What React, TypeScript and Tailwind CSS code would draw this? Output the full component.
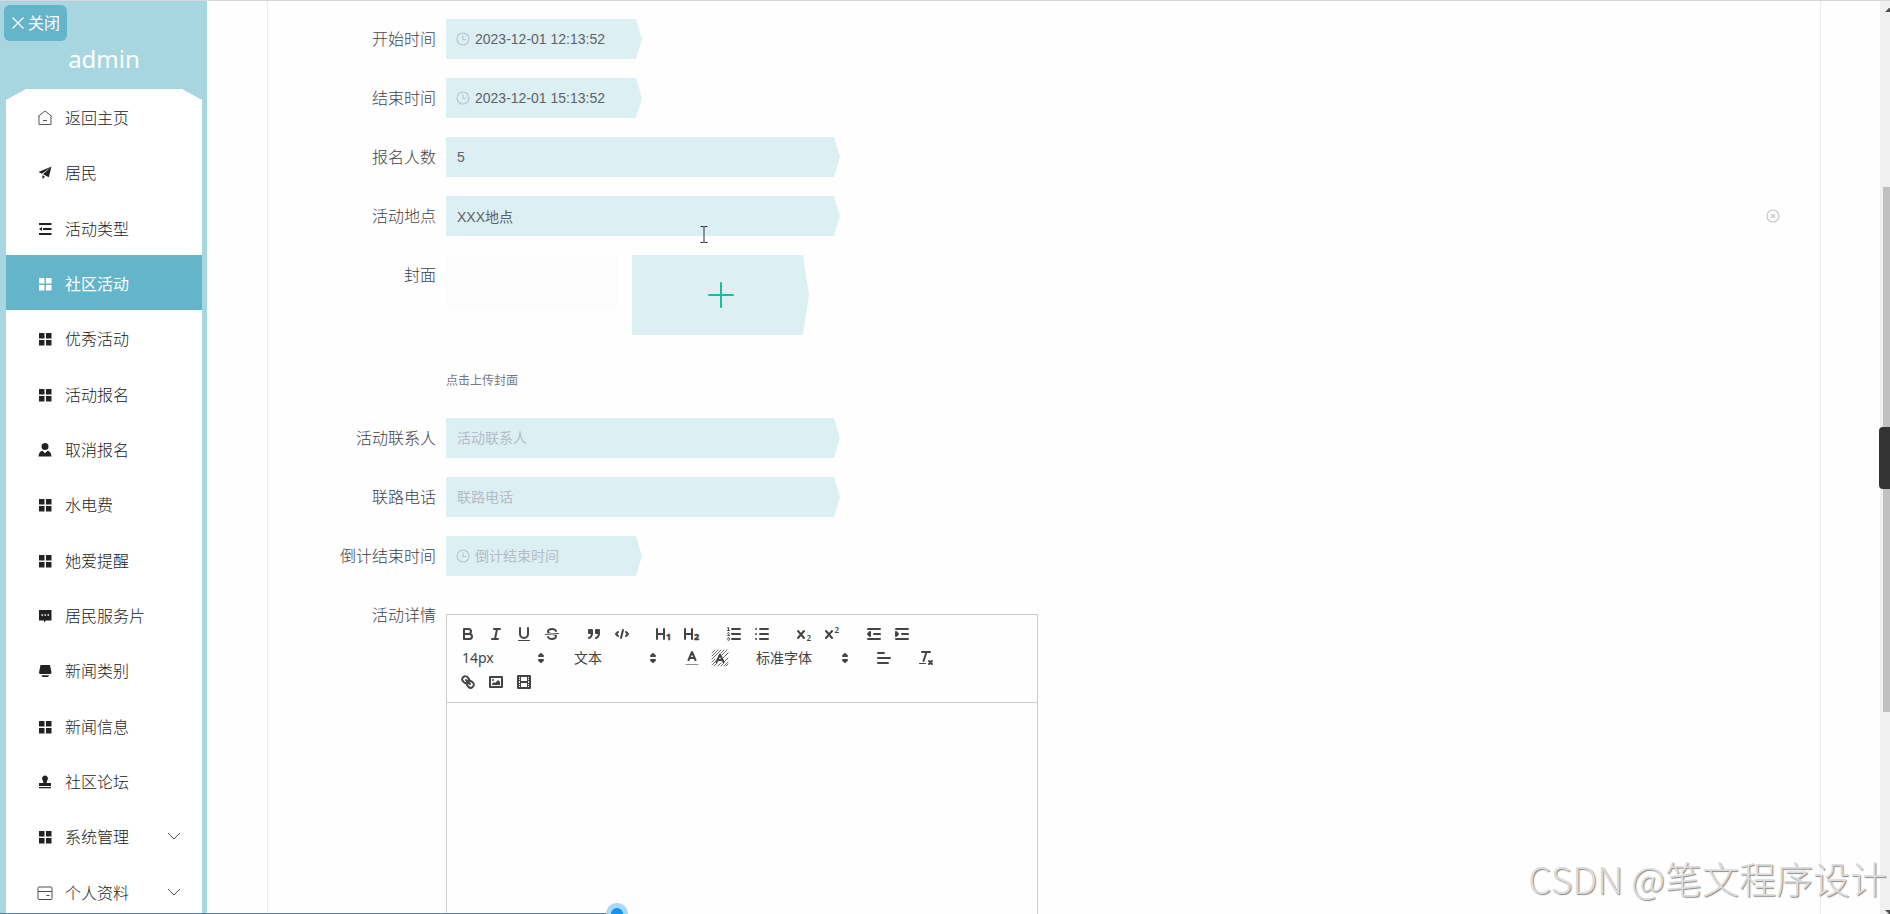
import type { ReactNode } from "react";

type NavIcon = "home" | "plane" | "fold" | "grid" | "user" | "comment" | "shop" | "stamp" | "card";

const squares = <path d="M3 3h5.500v5.500H3zM10 3h5.500v5.500H10zM3 10h5.500v5.500H3zM10 10h5.500v5.500H10z" fill="currentColor" />;

const navIcons: Record<NavIcon, ReactNode> = {
  home: (
    <g fill="none" stroke="currentColor" strokeWidth="1" opacity="0.75">
      <path d="M2 7.500 9 2l7 5.500M3 7v8.500h12V7" />
      <path d="M7 11.500h4" />
    </g>
  ),
  plane: <path d="M15.500 2.500 2.500 8l3.500 1.800zM15.500 2.500 7 10.300l5.800 3zM6.300 11.200l2.600 1.300-2.300 2.800z" fill="currentColor" />,
  fold: (
    <path d="M3 3h12.500v2H3zM7 8h8.500v2H7zM3 13h12.500v2H3zM3 9l3-2v4z" fill="currentColor" />
  ),
  grid: squares,
  user: (
    <g fill="currentColor">
      <circle cx="9" cy="5.500" r="3.500" />
      <path d="M2.500 15.500c.3-3.800 1.700-5.300 4-5.800L9 12.200l2.500-2.500c2.300.5 3.700 2 4 5.800z" />
    </g>
  ),
  comment: (
    <g>
      <path d="M3 3h12.500v10.500H10L8 15.500v-2H3z" fill="currentColor" />
      <path d="M5.500 8h1.500M8.500 8h1.500M11.500 8h1.500" stroke="white" strokeWidth="1.300" />
    </g>
  ),
  shop: (
    <path d="M4.500 3h9.500L15.500 10.500q-.2 1.500-1.500 1.500H4.500Q3.200 12 3 10.500zM5.500 13.200h7.500q-.2 1.800-1.500 1.800h-4.500q-1.300 0-1.500-1.800z" fill="currentColor" />
  ),
  stamp: (
    <path d="M9 2.500a3 3 0 0 1 2 5.200L10.500 10H15v3H3v-3h4.500L7 7.700a3 3 0 0 1 2-5.200zM3 14h12v1.300H3z" fill="currentColor" />
  ),
  card: (
    <g fill="none" stroke="currentColor" strokeWidth="1" opacity="0.8">
      <rect x="2" y="3" width="14" height="12.500" rx="1" />
      <path d="M2 7.500h14M10.500 11.500h3" />
    </g>
  ),
};

const navItems: { label: string; icon: NavIcon; active?: boolean; sub?: boolean }[] = [
  { label: "返回主页", icon: "home" },
  { label: "居民", icon: "plane" },
  { label: "活动类型", icon: "fold" },
  { label: "社区活动", icon: "grid", active: true },
  { label: "优秀活动", icon: "grid" },
  { label: "活动报名", icon: "grid" },
  { label: "取消报名", icon: "user" },
  { label: "水电费", icon: "grid" },
  { label: "她爱提醒", icon: "grid" },
  { label: "居民服务片", icon: "comment" },
  { label: "新闻类别", icon: "shop" },
  { label: "新闻信息", icon: "grid" },
  { label: "社区论坛", icon: "stamp" },
  { label: "系统管理", icon: "grid", sub: true },
  { label: "个人资料", icon: "card", sub: true },
];

function Sidebar() {
  return (
    <aside className="flex w-[207px] shrink-0 flex-col bg-[#a7d6e0] px-[5px] pl-[6px]">
      <div className="relative flex h-[89px] shrink-0 items-end justify-center pb-[14px]">
        <button className="absolute top-[5px] -left-[2px] flex h-9 w-[63px] items-center justify-center gap-[3px] rounded-md bg-[#64b4ca] text-base text-white">
          <svg viewBox="0 0 14 14" className="size-[14px]" fill="none" stroke="currentColor" strokeWidth="1.200">
            <path d="M1.500 1.500l11 11M12.500 1.500l-11 11" />
          </svg>
          关闭
        </button>
        <span className="text-2xl leading-8 text-white">admin</span>
      </div>
      <nav className="-mb-[5px] flex min-h-0 flex-1 flex-col bg-white [clip-path:polygon(0_11px,20px_0,calc(100%_-_20px)_0,100%_11px,100%_100%,0_100%)]">
        <ul className="flex flex-1 flex-col">
          {navItems.map((item) => (
            <li key={item.label} className="flex flex-1">
              <a
                href="#"
                className={
                  item.active
                    ? "flex flex-1 items-center gap-[11px] bg-[#64b4ca] pt-[3px] pr-[21px] pl-[30px] text-base leading-6 text-white"
                    : "flex flex-1 items-center gap-[11px] pt-[3px] pr-[21px] pl-[30px] text-base leading-6 font-light text-[#222]"
                }
              >
                <svg viewBox="0 0 18 18" className="size-[18px] shrink-0">
                  {navIcons[item.icon]}
                </svg>
                <span className="flex-1">{item.label}</span>
                {item.sub && (
                  <svg viewBox="0 0 14 14" className="size-[14px]" fill="none" stroke="#555" strokeWidth="1">
                    <path d="M1 3l6 6 6-6" />
                  </svg>
                )}
              </a>
            </li>
          ))}
        </ul>
      </nav>
    </aside>
  );
}

function Row({ id, label, children }: { id: string; label: string; children: ReactNode }) {
  return (
    <div className="mb-[19px] flex">
      <label
        htmlFor={id}
        className="h-10 w-[178px] shrink-0 pr-[10px] text-right text-base leading-[42px] font-light text-[#404246]"
      >
        {label}
      </label>
      {children}
    </div>
  );
}

const fieldClip = "[clip-path:polygon(0_0,calc(100%_-_6px)_0,100%_50%,calc(100%_-_6px)_100%,0_100%)]";

function TextField({ id, label, value, clearable }: { id: string; label: string; value?: string; clearable?: boolean }) {
  return (
    <Row id={id} label={label}>
      <div className="flex flex-1 items-center justify-between pr-[40px]">
        <input
          id={id}
          defaultValue={value}
          placeholder={label}
          className={`h-10 w-[394px] bg-[#dceff3] px-[11px] text-sm text-[#606266] outline-none placeholder:text-[#b4bcc6] ${fieldClip}`}
        />
        {clearable && (
          <button type="button" aria-label="清除">
            <svg viewBox="0 0 14 14" className="size-[14px]" fill="none" stroke="#c6c8cc" strokeWidth="1.200">
              <circle cx="7" cy="7" r="6" />
              <path d="M5 5l4 4M9 5l-4 4" />
            </svg>
          </button>
        )}
      </div>
    </Row>
  );
}

function DateField({ id, label, value }: { id: string; label: string; value?: string }) {
  return (
    <Row id={id} label={label}>
      <div className={`flex h-10 w-[196px] items-center gap-[5px] bg-[#dceff3] pl-[10px] ${fieldClip}`}>
        <svg viewBox="0 0 14 14" className="size-[14px] shrink-0" fill="none" stroke="#b9c5cb" strokeWidth="1.100">
          <circle cx="7" cy="7" r="6" />
          <path d="M7 3.500V7.500h3" />
        </svg>
        <input
          id={id}
          defaultValue={value}
          placeholder={label}
          className="h-10 min-w-0 flex-1 bg-transparent text-sm text-[#606266] outline-none placeholder:text-[#b4bcc6]"
        />
      </div>
    </Row>
  );
}

function Tool({ name, children }: { name: string; children: ReactNode }) {
  return (
    <button type="button" aria-label={name} className="flex h-6 w-7 items-center justify-center">
      <svg
        viewBox="0 0 18 18"
        className="size-[18px]"
        fill="none"
        stroke="#444"
        strokeWidth="2"
        strokeLinecap="round"
        strokeLinejoin="round"
      >
        {children}
      </svg>
    </button>
  );
}

function Picker({ label, wide, value }: { label: string; wide?: boolean; value: string }) {
  return (
    <span className={wide ? "relative flex h-6 w-[108px]" : "relative flex h-6 w-[98px]"}>
      <select aria-label={label} className="h-6 w-full appearance-none bg-transparent px-2 text-sm leading-6 text-[#444] outline-none">
        <option>{value}</option>
      </select>
      <svg
        viewBox="0 0 18 18"
        className="pointer-events-none absolute top-[3px] right-[2px] size-[18px]"
        fill="#444"
        stroke="#444"
        strokeWidth="2"
        strokeLinejoin="round"
      >
        <path d="M7 11l2 2 2-2zM7 7l2-2 2 2z" />
      </svg>
    </span>
  );
}

const digit = "font-['Noto_Sans'] text-[9px] font-bold";
const script = "font-['Noto_Sans'] text-[8px] font-semibold";

function Editor() {
  return (
    <div className="mt-[19px] w-[592px] border border-[#ccc] font-['Noto_Sans','Noto_Sans_CJK_SC',sans-serif]">
      <div className="border-b border-[#ccc] px-[7px] pt-[7px] pb-2">
        <div className="flex gap-[14px]">
          <div className="flex">
            <Tool name="加粗">
              <path d="M5 4h4.500a2.500 2.500 0 0 1 0 5H5zM5 9h5.500a2.500 2.500 0 0 1 0 5H5z" />
            </Tool>
            <Tool name="斜体">
              <path d="M7 4h6M5 14h6M8 14l2-10" />
            </Tool>
            <Tool name="下划线">
              <path d="M5 3v6a4 4 0 0 0 8 0V3" />
              <path d="M3.500 15.500h11" strokeWidth="1" />
            </Tool>
            <Tool name="删除线">
              <path d="M15.500 8.500l-13 1" strokeWidth="1" />
              <g fill="#444" stroke="none">
                <path d="M9.007,8C6.542,7.791,6,7.519,6,6.500,6,5.792,7.283,5,9,5c1.571,0,2.765.679,2.969,1.309a1,1,0,0,0,1.900-.617C13.356,4.106,11.354,3,9,3,6.200,3,4,4.538,4,6.500a3.200,3.200,0,0,0,.5,1.843Z" />
                <path d="M8.984,10C11.457,10.208,12,10.479,12,11.500c0,0.708-1.283,1.500-3,1.500-1.571,0-2.765-.679-2.969-1.309a1,1,0,1,0-1.900.617C4.644,13.894,6.646,15,9,15c2.800,0,5-1.538,5-3.500a3.200,3.200,0,0,0-.5-1.843Z" />
              </g>
            </Tool>
          </div>
          <div className="flex">
            <Tool name="引用">
              <path d="M4 5h3v3H4zM11 5h3v3h-3z" fill="#444" />
              <path d="M7 8c0 4-3 5-3 5M14 8c0 4-3 5-3 5" />
            </Tool>
            <Tool name="代码">
              <path d="M5 7L3 9l2 2M13 7l2 2-2 2M10 5L8 13" />
            </Tool>
          </div>
          <div className="flex">
            <Tool name="标题一">
              <path d="M2 4v10M9 4v10M2 9h7" />
              <text x="11" y="15" className={digit} fill="#444" stroke="#444" strokeWidth="0.500">
                1
              </text>
            </Tool>
            <Tool name="标题二">
              <path d="M2 4v10M9 4v10M2 9h7" />
              <text x="11" y="15" className={digit} fill="#444" stroke="#444" strokeWidth="0.500">
                2
              </text>
            </Tool>
          </div>
          <div className="flex">
            <Tool name="有序列表">
              <path d="M7 4h8M7 9h8M7 14h8" />
              <path
                d="M2.500 3l1-.5V5.500M2.500 5.500h2M4.500 10.500h-2c0-.2 1.850-1 1.850-2.200a1 1 0 0 0-1.850-.1M2.500 14.800a1 1 0 0 0 1.850-.1.700.700 0 0 0-.6-.7.700.700 0 0 0 .6-.7 1 1 0 0 0-1.850-.1"
                strokeWidth="1"
              />
            </Tool>
            <Tool name="无序列表">
              <path d="M7 4h8M7 9h8M7 14h8M3 4h.01M3 9h.01M3 14h.01" />
            </Tool>
          </div>
          <div className="flex">
            <Tool name="下标">
              <path d="M3 6l6 7M9 6l-6 7" />
              <text x="11.500" y="16" className={script} fill="#444" stroke="none">
                2
              </text>
            </Tool>
            <Tool name="上标">
              <path d="M3 6l6 7M9 6l-6 7" />
              <text x="11.500" y="8" className={script} fill="#444" stroke="none">
                2
              </text>
            </Tool>
          </div>
          <div className="flex">
            <Tool name="减少缩进">
              <path d="M3 14h12M3 4h12M9 9h6M5 7v4L3 9z" />
            </Tool>
            <Tool name="增加缩进">
              <path d="M3 14h12M3 4h12M9 9h6" />
              <path d="M3 7v4l2-2z" fill="#444" />
            </Tool>
          </div>
        </div>
        <div className="flex gap-[14px]">
          <Picker label="字号" value="14px" />
          <Picker label="标题" value="文本" />
          <div className="flex">
            <Tool name="文字颜色">
              <path d="M3 15.500h12" strokeWidth="1" opacity="0.6" />
              <path d="M5.500 11L9 3l3.500 8M11.600 9H6.400" />
            </Tool>
            <Tool name="背景颜色">
              <path
                d="M1 4l3-3M1 7l6-6M1 10l9-9M1 13L4 10M1 16l4-4M3 17l3-3M7 17l3-3M10 17l3-3M13 17l4-4M13 13l4-4M12 9l5-5M11 6l5-5M10 4l3-3M15 17l2-2M14 7l3-3"
                strokeWidth="0.800"
              />
              <path d="M5.500 13L9 5.500 12.500 13M11.500 11h-5" />
            </Tool>
          </div>
          <Picker label="字体" value="标准字体" wide />
          <Tool name="对齐">
            <path d="M3 9h12M3 14h10M3 4h6" />
          </Tool>
          <Tool name="清除格式">
            <path d="M5 3h8M6.500 12L9.500 3M12 12l3 3M15 12l-3 3" />
            <path d="M2.500 14.500h6" strokeWidth="1" />
          </Tool>
        </div>
        <div className="flex">
          <Tool name="链接">
            <path d="M7 7l4 4" />
            <path d="M8.900,4.577a3.476,3.476,0,0,1,.36,4.679A3.476,3.476,0,0,1,4.577,8.900C3.185,7.500,2.035,6.400,4.217,4.217S7.500,3.185,8.900,4.577Z" />
            <path d="M13.423,9.100a3.476,3.476,0,0,0-4.679-.36,3.476,3.476,0,0,0,.36,4.679c1.392,1.392,2.500,2.542,4.679.36S14.815,10.500,13.423,9.100Z" />
          </Tool>
          <Tool name="图片">
            <path d="M3 4h12v10H3z" />
            <g fill="#444" stroke="none">
              <circle cx="6" cy="7" r="1" />
              <path d="M5 12v-1l2-2 1 1 3-3 2 2v3z" />
            </g>
          </Tool>
          <Tool name="视频">
            <path d="M3 3h12v12H3z" />
            <path
              d="M5 3h1v12H5zM12 3h1v12h-1zM5 8h8v2H5zM3 5h3v1H3zM3 7h3v1H3zM3 10h3v1H3zM3 12h3v1H3zM12 5h3v1h-3zM12 7h3v1h-3zM12 10h3v1h-3zM12 12h3v1h-3z"
              fill="#444"
              stroke="none"
            />
          </Tool>
        </div>
      </div>
      <textarea id="detail" className="block h-[320px] w-full resize-none bg-transparent p-3 text-sm outline-none" />
    </div>
  );
}

export default function App() {
  return (
    <div className="relative flex h-screen overflow-hidden bg-[#fefefe] font-['Noto_Sans','Noto_Sans_CJK_SC',sans-serif]">
      <Sidebar />
      <main className="min-w-0 flex-1 overflow-hidden pr-[59px] pl-[60px]">
        <form className="border-x border-[#ebeef0] pt-[19px] font-['Liberation_Sans','Noto_Sans_CJK_SC',sans-serif]">
          <DateField id="start" label="开始时间" value="2023-12-01 12:13:52" />
          <DateField id="end" label="结束时间" value="2023-12-01 15:13:52" />
          <TextField id="count" label="报名人数" value="5" />
          <TextField id="place" label="活动地点" value="XXX地点" clearable />
          <Row id="cover" label="封面">
            <div className="flex h-[144px] flex-col justify-between">
              <div className="flex gap-[14px]">
                <div className="h-[52px] w-[172px] bg-[#fdfcfd]" />
                <button
                  id="cover"
                  type="button"
                  aria-label="上传封面"
                  className="flex h-20 w-[177px] items-center justify-center bg-[#dceff2] [clip-path:polygon(0_0,calc(100%_-_6px)_0,100%_50%,calc(100%_-_6px)_100%,0_100%)]"
                >
                  <svg viewBox="0 0 26 26" className="size-[26px]" stroke="#1abc9c" strokeWidth="2" strokeLinecap="round">
                    <path d="M1 13h24M13 1v24" />
                  </svg>
                </button>
              </div>
              <p className="pb-2 text-xs leading-5 text-[#76797f]">点击上传封面</p>
            </div>
          </Row>
          <TextField id="contact" label="活动联系人" />
          <TextField id="phone" label="联路电话" />
          <DateField id="countdown" label="倒计结束时间" />
          <Row id="detail" label="活动详情">
            <Editor />
          </Row>
        </form>
      </main>
      <div className="flex w-[10px] shrink-0 flex-col items-end bg-[#f0f0f0]">
        <div className="flex h-[187px] w-full shrink-0 justify-end pt-2">
          <svg viewBox="0 0 5 4" className="h-1 w-[5px]">
            <path d="M0 4L4 0h1v4z" fill="#505050" />
          </svg>
        </div>
        <div className="h-[525px] w-[7px] shrink-0 bg-[#c0c0c0]" />
        <div className="flex flex-1 items-end">
          <svg viewBox="0 0 5 4" className="h-1 w-[5px]">
            <path d="M0 0h5v4H4z" fill="#505050" />
          </svg>
        </div>
      </div>

      <div className="absolute inset-x-0 top-0 h-px bg-[#d5d8d9]" />
      <div className="absolute top-[427px] right-0 h-[62px] w-[11px] rounded-l-sm bg-[#333]" />
      <svg viewBox="0 0 8 17" className="absolute top-[226px] left-[700px] h-[17px] w-2" fill="none" stroke="#333" strokeWidth="1">
        <path d="M.5.500h2.500q1 0 1 1 0-1 1-1h2.500M4 1.500v14M.5 16.500h2.500q1 0 1-1 0 1 1 1h2.500" />
      </svg>
      <div className="absolute bottom-0 left-0 h-px w-[617px] bg-[#1e8fe8]" />
      <div className="absolute -bottom-[11px] left-[606px] flex size-[22px] items-center justify-center rounded-full bg-[#a9d8fb]">
        <div className="size-3 rounded-full bg-[#1292f5]" />
      </div>
      <div className="absolute right-[3px] bottom-[9px] font-['Noto_Sans_CJK_SC',sans-serif] text-[37px] leading-[54px] font-light whitespace-nowrap text-[#dcdcdc] [text-shadow:1px_1px_1px_#8a8a8a]">
        CSDN @笔文程序设计
      </div>
    </div>
  );
}
